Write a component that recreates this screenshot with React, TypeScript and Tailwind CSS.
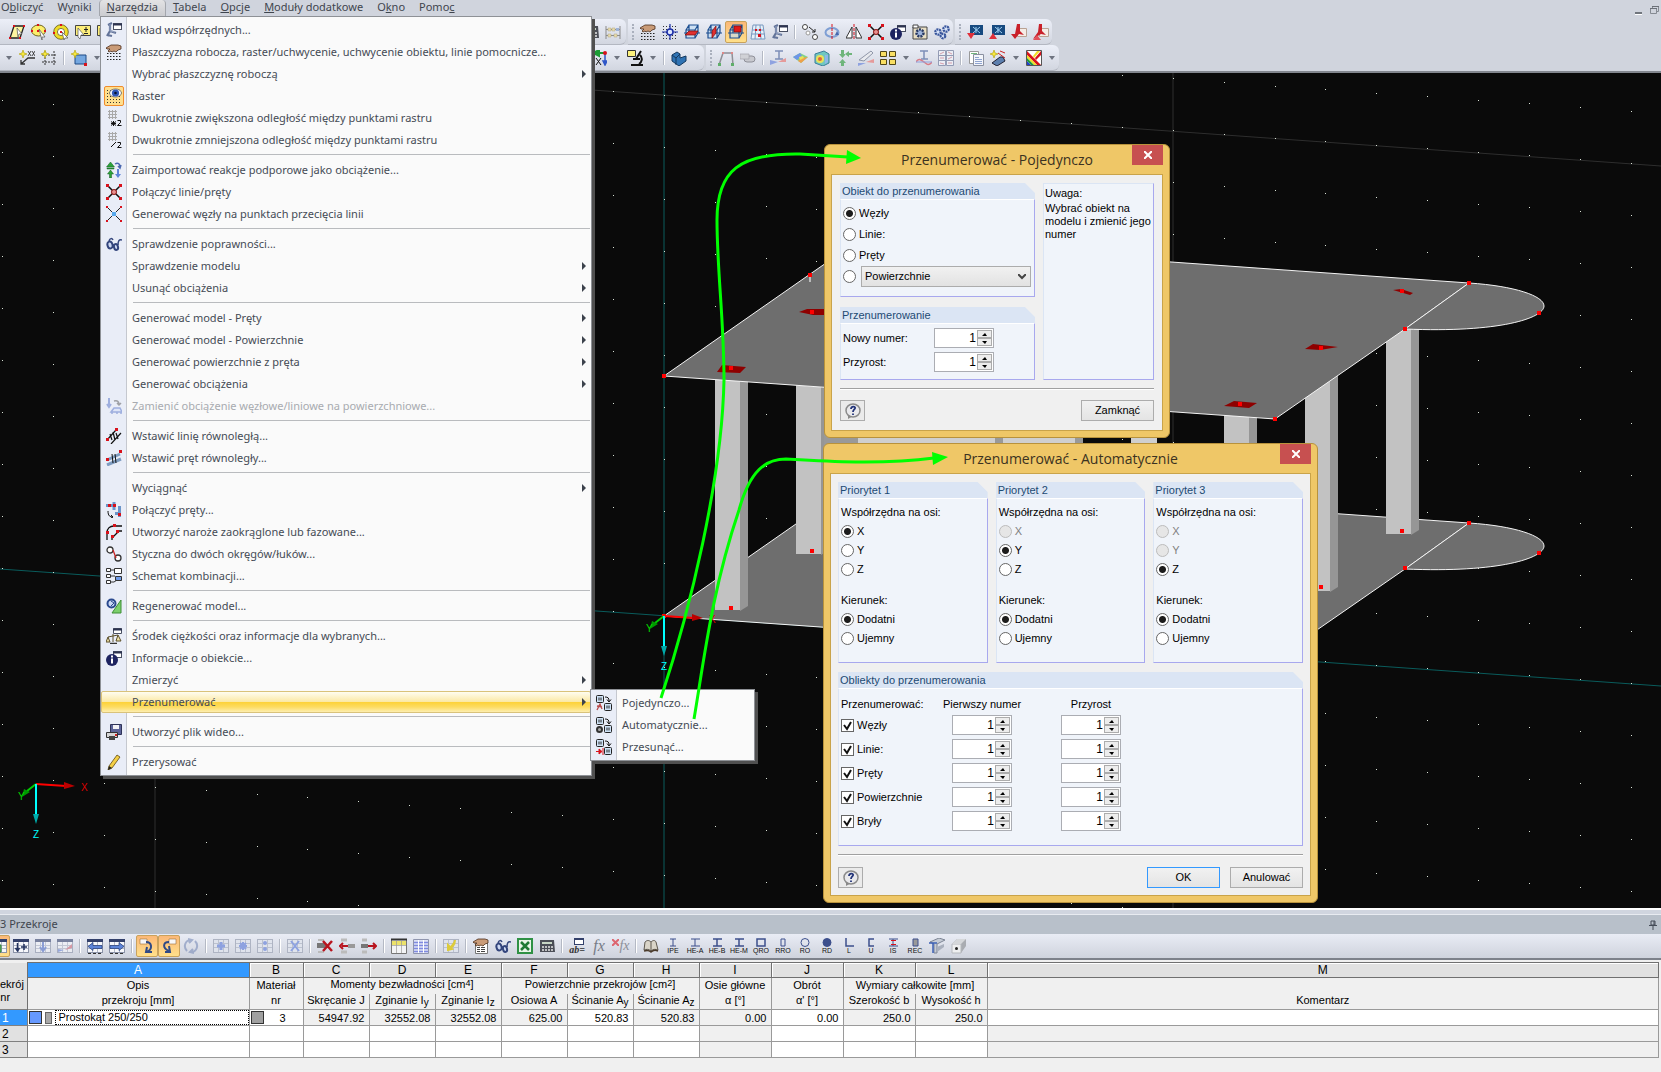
import type { ReactNode } from 'react';
import clsx from 'clsx';

// ---------------------------------------------------------------- icons

const miniWindow = (
  <>
    <rect x="7.5" y="1.5" width="8" height="6" fill="#fff" stroke="#4a5063" />
    <path d="M7 2.5h9" stroke="#2c3350" strokeWidth="2" />
  </>
);

const dotGrid = (
  <path
    d="M1 2.5h14M1 5.5h14M1 8.5h14M1 11.5h14M1 14.5h14"
    stroke="#333"
    strokeDasharray="1 2"
    fill="none"
  />
);

const hand = (
  <path
    d="M0 4l5-3h7l3 1v3l-3 1-2 2-2-1-2 1-1-1-2 1-1-1 2-2-3 0z"
    fill="#c99b78"
    stroke="#4b2f1c"
    strokeWidth=".8"
  />
);

const cornerNodes = (
  <path d="M0 0h3v3h-3zM13 0h3v3h-3zM0 13h3v3h-3zM13 13h3v3h-3z" fill="#d8121c" />
);

const sheet = (
  <>
    <rect x=".5" y="1.5" width="15" height="13" fill="#f6f7fb" stroke="#8b93a8" />
    <path d="M0 2.5h16" stroke="#33406b" strokeWidth="3" />
    <path d="M1 7.5h14M1 10.5h14M5.5 4v10M10.5 4v10" stroke="#b3b9c8" />
  </>
);

const fadedSheet = (
  <>
    <rect x=".5" y="1.5" width="15" height="13" fill="#dfe3ec" stroke="#aeb4c3" />
    <path d="M1 5.5h14M1 9.5h14M5.5 2v12M10.5 2v12" stroke="#bcc2cf" />
  </>
);

const renumBoxes = (
  <>
    <rect x=".5" y=".5" width="7" height="7" rx="1" fill="#cfe3f7" stroke="#222" />
    <rect x="8.5" y="8.5" width="7" height="7" rx="1" fill="#cfe3f7" stroke="#222" />
    <path d="M3 2.5v3M5 2.5v3M11 10.5v3M13 10.5v3" stroke="#222" />
    <path d="M9 2c3 0 4 1 4 4M11 4.500l2 2.500 2-2.500" stroke="#111" fill="none" />
  </>
);

const planes = (
  <path
    d="M5 1h9v8h-9zM2 6h9v8h-9zM2 6l3-5M11 14l3-5M11 6l3-5M0 9h16"
    fill="#bfdcf5"
    fillOpacity=".6"
    stroke="#1d4f91"
    strokeWidth="1.200"
  />
);

const star = (
  <path d="M4 0l1 3 3 1-3 1-1 3-1-3-3-1 3-1z" fill="#f8ea3a" stroke="#b8a91c" strokeWidth=".7" />
);

const glyphs: Record<string, ReactNode> = {
  axes: (
    <>
      <path d="M4 1v8l-3 5M4 9l6 2M1 13l5 1M2 3l4-2" stroke="#63749a" strokeWidth="2.200" fill="none" />
      <path d="M4 2v7l5 1" stroke="#aab8d3" strokeWidth=".7" fill="none" />
      {miniWindow}
    </>
  ),
  handGrid: (
    <>
      <path d="M1 9.500h14M1 12.500h14M1 15.500h14" stroke="#222" strokeDasharray="1.500 1.500" />
      {hand}
    </>
  ),
  gridEye: (
    <>
      {dotGrid}
      <ellipse cx="9.500" cy="5" rx="6" ry="4" fill="#f4f7ff" stroke="#333" strokeWidth=".6" />
      <circle cx="9.500" cy="5" r="3.600" fill="#2f57b8" />
      <circle cx="9.500" cy="5" r="1.300" fill="#08122e" />
    </>
  ),
  gridTimes: (
    <>
      <path d="M3.500 0v9M6.500 0v9M9.500 0v9M2 1.500h9M2 4.500h9M2 7.500h9" stroke="#a9a9a9" />
      <path d="M7.500 11v5M5 11.500l5 4M10 11.500l-5 4M5 13.500h5" stroke="#111" />
      <path d="M11.500 10.500h3v2l-3 3h4" stroke="#111" fill="none" />
    </>
  ),
  gridHalf: (
    <>
      <path d="M3.500 0v9M6.500 0v9M9.500 0v9M2 1.500h9M2 4.500h9M2 7.500h9" stroke="#a9a9a9" />
      <path d="M5 15l5-5" stroke="#111" />
      <path d="M11.500 10.500h3v2l-3 3h4" stroke="#111" fill="none" />
    </>
  ),
  reactions: (
    <>
      <path d="M4.500 0l4 5h-8zM4.500 8l3 4h-2v4h-2v-4h-2zM1 6h7v1h-7z" fill="#2ba33a" stroke="#125c1c" strokeWidth=".5" />
      <path d="M12 16l3-4h-2v-5h-2v5h-2z" fill="#5d84d8" />
      <path d="M9 2c3-2 5 0 5 3M12 4l2 2 1-3" stroke="#4a68b0" fill="none" strokeWidth="1.500" />
    </>
  ),
  joinNodes: (
    <>
      <path d="M2 2l12 12M14 2l-12 12" stroke="#111" strokeWidth="1.500" />
      <circle cx="8" cy="8" r="2.500" fill="#e89090" stroke="#8d1010" />
      {cornerNodes}
    </>
  ),
  crossNodes: (
    <>
      <path d="M1 1l14 14M15 1l-14 14" stroke="#222" />
      <path d="M6 6h4v4h-4z" fill="#58a8ea" />
      <path d="M0 0h2v2h-2zM14 0h2v2h-2zM0 14h2v2h-2zM14 14h2v2h-2z" fill="#d8121c" />
    </>
  ),
  glasses: (
    <>
      <ellipse cx="4" cy="9" rx="2.500" ry="3.500" fill="#cdd9f3" stroke="#33457c" strokeWidth="2" transform="rotate(-15 4 9)" />
      <ellipse cx="10" cy="11" rx="2" ry="3" fill="#cdd9f3" stroke="#33457c" strokeWidth="2" transform="rotate(-15 10 11)" />
      <path d="M3 5c1-3 3-3 4-1M12 9c0-4 1-6 4-5M6 9l2 0" stroke="#33457c" strokeWidth="1.500" fill="none" />
    </>
  ),
  convertLoad: (
    <g opacity=".5">
      <path d="M3 0v8M1 6l2 3 2-3" stroke="#5572c8" strokeWidth="2" fill="none" />
      <path d="M8 3c4-1 5 1 5 4M11 5l2 2 2-2" stroke="#555" fill="none" strokeWidth="1.500" />
      <path d="M5 14l3-4h6l2 4zM6 14v2M11 14v2M15 14v2" stroke="#5572c8" strokeWidth="1.500" fill="#d5def7" />
    </g>
  ),
  parallelLines: (
    <>
      <path d="M1 12l9-10M5 16l10-11M4 6l2 6M7 4l2 8M10 5l2 6" stroke="#111" strokeWidth="1.200" />
      <path d="M0 10h3v3h-3zM9 0h3v3h-3z" fill="#d8121c" />
    </>
  ),
  parallelBars: (
    <>
      <path d="M1 10l13-6M1 15l14-6" stroke="#7e9cc0" strokeWidth="3" />
      <path d="M6 4l1 9M9 4l1 9" stroke="#111" />
      <path d="M0 8h3v3h-3zM13 0h3v3h-3z" fill="#d8121c" />
    </>
  ),
  joinBars: (
    <>
      <path d="M0 3.500h7M8 0v8M13.500 4v11M9 11.500h4" stroke="#6b95c9" strokeWidth="3" />
      <path d="M2 2h3v3h-3zM7 2h3v3h-3zM12 11h3v3h-3z" fill="#d8121c" />
      <path d="M2 9c0 5 2 6 5 6M5 13l2 2-2 1" stroke="#111" fill="none" />
    </>
  ),
  fillet: (
    <>
      <path d="M1 16v-7c0-5 3-7 7-7h8M6 16v-2l7-7h3" stroke="#111" fill="none" strokeWidth="1.300" />
      <path d="M0 7h3v3h-3zM7 0h3v3h-3zM5 11h3v3h-3zM10 6h3v3h-3z" fill="#d8121c" />
    </>
  ),
  tangent: (
    <>
      <circle cx="4" cy="4" r="3" fill="#fff" stroke="#333" strokeWidth="1.300" />
      <circle cx="12" cy="12" r="3" fill="#fff" stroke="#333" strokeWidth="1.300" />
      <path d="M7 4l3 8" stroke="#c22" strokeWidth="1.300" />
    </>
  ),
  scheme: (
    <>
      <path d="M.5.500h4v3h-4zM.5 6.500h4v3h-4zM.5 12.500h4v3h-4zM8.500.500h7v5h-7z" fill="#fff" stroke="#333" />
      <path d="M9.500 8.500h6v4h-6z" fill="#6f9be8" stroke="#333" />
      <path d="M5 2h4M5 8h4M5 14h3l3-2" stroke="#333" fill="none" />
    </>
  ),
  regen: (
    <>
      <path d="M6 15l9-13v13z" fill="#7ccf6c" stroke="#3f8f37" />
      <circle cx="5.500" cy="5.500" r="4" fill="#c9d8f5" stroke="#2b4a8e" strokeWidth="2" />
      <path d="M5 3l3 2-3 3" fill="none" stroke="#2b4a8e" />
    </>
  ),
  balance: (
    <>
      <path d="M7 6v8M2 9l10-2M2 9l-2 5h4zM12 7l-2 6h5z" stroke="#5b4f2a" fill="#f0e3a8" />
      <path d="M4 15.500h7" stroke="#333" strokeWidth="1.500" />
      <path d="M7.500.500h8v5h-8z" fill="#fff" stroke="#4a5063" />
      <path d="M7 1.500h9" stroke="#2c3350" strokeWidth="2" />
    </>
  ),
  info: (
    <>
      {miniWindow}
      <circle cx="6" cy="10" r="6" fill="#1d2360" />
      <path d="M5 8.500h2v5h-2zM5 5.500h2v2h-2z" fill="#fff" />
    </>
  ),
  video: (
    <>
      <path d="M4.500.500h11v10h-11z" fill="#5c6398" stroke="#2e3358" />
      <path d="M7 1h6v4h-6z" fill="#f2f2f6" />
      <path d="M.5 8.500h11v5h-11z" fill="#d6d6d6" stroke="#333" />
      <path d="M3 12h6v4h-6z" fill="#444" />
      <path d="M9 10h2v2h-2z" fill="#c22" />
    </>
  ),
  pencil: (
    <>
      <path d="M3 12l8-11 3 2-8 11-4 2z" fill="#f4cf45" stroke="#5f4a12" strokeWidth=".8" />
      <path d="M2 16l1-4 3 2z" fill="#222" />
    </>
  ),
  renumSingle: (
    <>
      {renumBoxes}
      <path d="M1 15l3-6 2 5M1 11l5 1" stroke="#b94a4a" fill="none" strokeWidth="1.300" />
    </>
  ),
  renumAuto: (
    <>
      {renumBoxes}
      <circle cx="3.500" cy="12.500" r="2.500" fill="#aaa" stroke="#333" strokeWidth="2" />
    </>
  ),
  renumShift: (
    <>
      {renumBoxes}
      <path d="M0 12.500h4M3 10l3 2.500-3 2.500z" stroke="#d8121c" fill="#d8121c" />
      <path d="M7 9v7" stroke="#d8121c" />
    </>
  ),
  selectPoly: (
    <>
      <path d="M5 2h10l-4 12h-10z" fill="#fdf6a0" stroke="#222" strokeWidth="1.300" />
      <path d="M8 4l5 6-3 0-1 4z" fill="#fff" stroke="#555" strokeWidth=".7" />
      <path d="M4 1h2v2h-2zM14 1h2v2h-2zM0 13h2v2h-2zM10 13h2v2h-2z" fill="#d8121c" />
    </>
  ),
  selectEllipse: (
    <>
      <ellipse cx="7.500" cy="6.500" rx="7" ry="5.500" fill="#fdee6a" stroke="#6d6320" />
      <path d="M8 5l6 8-3 0 0 3z" fill="#fff" stroke="#555" strokeWidth=".7" />
      <path d="M6 0h2v2h-2zM6 6h2v2h-2zM0 6h2v2h-2zM13 6h2v2h-2z" fill="#d8121c" />
    </>
  ),
  selectRing: (
    <>
      <circle cx="8" cy="8" r="5.500" fill="#fff" stroke="#f0dc28" strokeWidth="3.500" />
      <circle cx="8" cy="8" r="7.300" fill="none" stroke="#5e5615" strokeWidth=".8" />
      <circle cx="8" cy="8" r="3.600" fill="none" stroke="#5e5615" strokeWidth=".8" />
      <path d="M9 8l6 6-3 0-1 2z" fill="#fff" stroke="#555" strokeWidth=".7" />
      <path d="M7 7h2v2h-2zM7 0h2v2h-2zM0 8h2v2h-2z" fill="#d8121c" />
    </>
  ),
  selectPlus: (
    <>
      <path d="M.5 1.500h15v10h-15z" fill="#fdee7a" stroke="#444" />
      <path d="M11 3v5M9 5.500h4M9 9.500h4" stroke="#222" />
      <path d="M3 4l6 7-3 0-1 4-2-2z" fill="#fff" stroke="#555" strokeWidth=".7" />
    </>
  ),
  abacus: (
    <>
      <path d="M1 2v13M15 2v13M1 5.500h14M1 11.500h14" stroke="#8b8b8b" />
      <path d="M3 4h3v3h-3zM7 4h3v3h-3zM3 10h3v3h-3zM9 10h3v3h-3z" fill="#e8dcae" stroke="#b0a77f" strokeWidth=".5" />
      <path d="M11 4h3v3h-3z" fill="#9db3da" />
    </>
  ),
  snapGrid: (
    <>
      {dotGrid}
      <path d="M8 0v16M0 8h16" stroke="#1c2fa8" strokeWidth="1.200" />
      <circle cx="8" cy="8" r="3" fill="#dde6ff" stroke="#1c2fa8" strokeWidth="1.500" />
    </>
  ),
  planeA: (
    <>
      {planes}
      <path d="M1 11l4-4h9l-3 4z" fill="#e03030" stroke="#7a0d0d" strokeWidth=".7" />
    </>
  ),
  planeB: (
    <>
      {planes}
      <path d="M6 7l4-5v7l-4 5z" fill="#e03030" stroke="#7a0d0d" strokeWidth=".7" />
    </>
  ),
  planeC: (
    <>
      {planes}
      <path d="M6 2h7v6h-7z" fill="#e01818" stroke="#7a0d0d" strokeWidth=".7" />
    </>
  ),
  mesh: (
    <>
      <path d="M3 1h10l2 14h-14zM2 6h12M1 10h14M6 1l-1 14M10 1l1 14" fill="#e8f1fa" stroke="#7898bf" />
      <path d="M5 5h2v2h-2zM9 5h2v2h-2zM8 10h3v3h-3z" fill="#d8121c" />
    </>
  ),
  moveNode: (
    <>
      <circle cx="3" cy="3" r="2.500" fill="#fff" stroke="#444" />
      <circle cx="6" cy="9" r="2" fill="#fff" stroke="#999" />
      <circle cx="13" cy="13" r="2.500" fill="#fff" stroke="#444" />
      <path d="M7 3l6 5M13 5v3h-3" stroke="#222" fill="none" />
    </>
  ),
  rotate: (
    <>
      <ellipse cx="8" cy="8.500" rx="6.500" ry="4.500" fill="none" stroke="#7f9fd4" strokeWidth="2" />
      <path d="M11 11l4 0-2-4z" fill="#4668ad" />
      <path d="M8 0v16" stroke="#d8121c" strokeDasharray="3 1" />
    </>
  ),
  mirror: (
    <>
      <path d="M6 3v11h-6zM10 3v11h6z" fill="#fff" stroke="#333" />
      <path d="M8 0v16" stroke="#d8121c" strokeDasharray="3 1" />
    </>
  ),
  boxGear: (
    <>
      <path d="M1 3h14v12h-14z" fill="#e9dfc4" stroke="#444" />
      <path d="M1 1h5v3h-5z" fill="#fff" stroke="#444" />
      <circle cx="8" cy="9" r="3.500" fill="#9db4dc" stroke="#263761" strokeWidth="2.500" strokeDasharray="2 1" />
    </>
  ),
  cogs: (
    <g fill="#d6e2f8" stroke="#38559c" strokeWidth="2.200" strokeDasharray="2 .7">
      <circle cx="4" cy="8" r="2.700" />
      <circle cx="12" cy="5" r="2.700" />
      <circle cx="9" cy="12" r="2.300" />
    </g>
  ),
  screenDown: (
    <>
      <path d="M3 1h13v10h-13z" fill="#174a80" />
      <path d="M6 3l7 6M13 3l-7 6M9 3v6" stroke="#9fd0f3" />
      <path d="M0 9h8l-4 6z" fill="#e0303a" />
    </>
  ),
  screenUp: (
    <>
      <path d="M3 1h13v10h-13z" fill="#174a80" />
      <path d="M6 3l7 6M13 3l-7 6M9 3v6" stroke="#9fd0f3" />
      <path d="M0 15h8l-4-6z" fill="#e0303a" />
    </>
  ),
  pdfDown: (
    <>
      <path d="M6.500 4.500h9v8h-9z" fill="#f5ece6" stroke="#b9a294" />
      <path d="M6 0h3v7l4 4-5-1v0l-4 5-4-5h4z" fill="#c9202a" />
    </>
  ),
  pdfUp: (
    <>
      <path d="M6.500 4.500h9v8h-9z" fill="#f5ece6" stroke="#b9a294" />
      <path d="M6 0h3v7l4 4-5-1-8 5 5-7z" fill="#c9202a" />
      <path d="M0 16h8l-4-5z" fill="#e0505a" />
    </>
  ),
  newAxis: (
    <>
      <path d="M2 14l7-6h7M2 10v4h4" stroke="#333" fill="none" strokeWidth="1.300" />
      <path d="M9 1l3 5M12 1l-3 5M13 1l3 5M16 1l-3 5" stroke="#222" strokeWidth=".8" />
      {star}
    </>
  ),
  newFrame: (
    <>
      <path d="M4 1v14M13 1v14M1 5h15M1 12h15" stroke="#333" strokeDasharray="2 1" />
      {star}
    </>
  ),
  newBox: (
    <>
      <path d="M4 5h11v9h-11z" fill="#74a7e0" stroke="#1f4b85" />
      <path d="M13 13h3v3h-3z" fill="#d8121c" />
      {star}
    </>
  ),
  viewX: (
    <>
      <path d="M15 3h-8M8 0l-6 3 6 3z" stroke="#1b9c34" strokeWidth="2" fill="#1b9c34" />
      <path d="M14 4v10M12 11l2 4 2-4z" stroke="#2f57c8" strokeWidth="1.500" />
      <circle cx="14" cy="3" r="2" fill="#d8121c" />
      <path d="M0 11.500h3M5 8l5 7M10 8l-5 7" stroke="#111" />
    </>
  ),
  microscope: (
    <>
      <path d="M.5.500h8v6h-8z" fill="#fdf27c" stroke="#333" />
      <path d="M14 1l-5 8M6 9h7M4 15h12M13 5c3 3 2 7-1 9" stroke="#111" strokeWidth="2" fill="none" />
    </>
  ),
  solid: (
    <>
      <path d="M1 5l5-3 3 2v4l6-2v5l-7 5-7-5z" fill="#2f73b4" stroke="#14385e" />
      <path d="M1 5l4 3v7M5 8l4-4" stroke="#14385e" fill="none" />
    </>
  ),
  frame: (
    <>
      <path d="M1 15l4-12h9l1 12" stroke="#8f8f96" strokeWidth="1.500" fill="none" />
      <path d="M0 13h3v3h-3zM13 13h3v3h-3z" fill="#5fae6a" />
      <path d="M4 2h2v2h-2zM13 2h2v2h-2z" fill="#d88" />
    </>
  ),
  capsule: (
    <>
      <rect x="4" y="6" width="11" height="6" rx="3" fill="#c8c9cf" stroke="#8e8f98" />
      <path d="M0 4h9v5h-9z" fill="#d0d1d6" stroke="#a4a5ad" strokeWidth=".7" />
    </>
  ),
  beamForce: (
    <>
      <path d="M5 1h8M9 1v8M5 9h8" stroke="#7d8fb8" strokeWidth="1.500" />
      <path d="M0 10v5l8-3z" fill="#8ea2e0" />
      <path d="M8 12l8-4v4z" fill="#e59a9a" />
    </>
  ),
  surfaceColor: (
    <>
      <path d="M1 7l7-4 8 4-7 6z" fill="#7fd38b" />
      <path d="M1 7l7-4 2 3-5 4z" fill="#6d95e8" />
      <path d="M9 8l7-1-7 6-3-2z" fill="#f0a04a" />
      <path d="M7 7l4-1 1 2-4 2z" fill="#e9e15a" />
    </>
  ),
  solidColor: (
    <>
      <path d="M1 4l9-3 5 3v9l-6 3-8-3z" fill="#6fc7c0" stroke="#3c7d9a" />
      <circle cx="6" cy="9" r="4" fill="#e9e15a" />
      <circle cx="6" cy="9" r="2" fill="#e0633c" />
      <path d="M11 5l3 0v7l-3 2z" fill="#8fb6e8" />
    </>
  ),
  supportArrows: (
    <path
      d="M5 0h3v4h2l-3.500 4-3.500-4h2zM5 16h3v-3h2l-3.500-4-3.500 4h2zM16 3h-3v-2l-4 3 4 3v-2h3z"
      fill="#6fb57b"
    />
  ),
  blade: (
    <>
      <path d="M1 10l12-9 2 2-9 8z" fill="#e8eaef" stroke="#8f96a8" />
      <path d="M0 13h8l-8 3z" fill="#8ea2e0" />
      <path d="M8 12l8-3v4z" fill="#e59a9a" />
    </>
  ),
  fourBoxes: (
    <path
      d="M.5 1.500h6v5h-6zM9.500 1.500h6v5h-6zM.5 9.500h6v5h-6zM9.500 9.500h6v5h-6z"
      fill="#f8de62"
      stroke="#4f4519"
    />
  ),
  moment: (
    <>
      <path d="M4 1h8M8 1v8M5 9h7" stroke="#7d8fb8" strokeWidth="1.500" />
      <path d="M0 12c3-5 6-1 8 0s4 5 8 0" stroke="#d87b86" strokeWidth="1.500" fill="none" />
      <path d="M0 12h16" stroke="#8ea2e0" />
    </>
  ),
  diagrams: (
    <>
      <path d="M.5.500h7v15h-7zM8.500.500h7v15h-7zM0 5.500h16M0 10.500h16" fill="#eceef5" stroke="#949cb5" />
      <path d="M2 4l4-2M10 2l4 2M2 8h4M10 9l4-2M2 13l4 1M10 13h4" stroke="#cb7d8d" strokeWidth=".7" />
    </>
  ),
  report: (
    <>
      <path d="M1.500 1.500h9v12h-9z" fill="#fff" stroke="#999" />
      <path d="M5.500 4.500h10v11h-10z" fill="#f4f6fb" stroke="#8a90a0" />
      <path d="M7 7.500h4M7 9.500h7M7 11.500h7M7 13.500h7" stroke="#8fa4d0" />
      <path d="M3 3.500h6" stroke="#6fb57b" />
    </>
  ),
  wizard: (
    <>
      <path d="M2 13l8-6 3 0 2 4-8 5z" fill="#5c7fae" stroke="#223" />
      <path d="M8 3l7 5M10 1l5 2" stroke="#c22" />
      {star}
    </>
  ),
  palette: (
    <>
      <path d="M.5.500h15v15h-15z" fill="#fff" stroke="#555" />
      <path d="M1 1l14 14h-4l-10-10z" fill="#d8121c" />
      <path d="M1 5l10 10h-3l-7-7z" fill="#f2e02a" />
      <path d="M1 8l7 7h-3l-4-4z" fill="#1d9c3c" />
      <path d="M1 11l4 4h-4z" fill="#2040c8" />
      <path d="M9 8l6-7v4l-5 5z" fill="#d8121c" />
      <path d="M7 6l4-5h3l-6 7z" fill="#f2e02a" />
    </>
  ),
  sheetCheck: (
    <>
      {sheet}
      <path d="M2 7h8v7h-8z" fill="#69c06b" stroke="#2c7a34" />
    </>
  ),
  sheetAdd: (
    <>
      {sheet}
      <path d="M4.500 5v8M2.500 10l2 3 2-3M8 9h6M11 6v6" stroke="#22325f" strokeWidth="1.500" fill="none" />
    </>
  ),
  sheetDown: (
    <g opacity=".6">
      {sheet}
      <path d="M8 4v8M5 9l3 4 3-4" stroke="#5572c8" strokeWidth="2" fill="none" />
    </g>
  ),
  sheetSlope: (
    <g opacity=".6">
      {sheet}
      <path d="M1 14v-3l6 1z" fill="#6b86d8" />
      <path d="M8 12l7-6v4z" fill="#d46a78" />
    </g>
  ),
  sheetLeft: (
    <>
      {sheet}
      <path d="M1 8.500l5-4v3h9v3h-9v2z" fill="#5d84d8" stroke="#223a75" strokeWidth=".7" />
      <path d="M1 15.500h14" stroke="#333" strokeDasharray="3 2" />
    </>
  ),
  sheetRight: (
    <>
      {sheet}
      <path d="M15 8.500l-5-4v3h-9v3h9v2z" fill="#5d84d8" stroke="#223a75" strokeWidth=".7" />
      <path d="M1 15.500h14" stroke="#333" strokeDasharray="3 2" />
    </>
  ),
  jumpDown: (
    <>
      <path d="M1 1h7v5h-7z" fill="#f7f7f7" stroke="#9a6b35" strokeWidth=".6" />
      <path d="M7 4c6 0 7 7 1 10M8 9l-1 5 6 0" stroke="#2f4a86" strokeWidth="2" fill="none" />
    </>
  ),
  jumpUp: (
    <>
      <path d="M8 1h7v5h-7z" fill="#f7f7f7" stroke="#9a6b35" strokeWidth=".6" />
      <path d="M8 4c-6 0-7 6 0 9M8 8l1 6-5 0" stroke="#2f4a86" strokeWidth="2" fill="none" />
    </>
  ),
  refresh: (
    <g opacity=".6" stroke="#7a8cb8" strokeWidth="2" fill="none">
      <path d="M8 2c-6 0-8 7-4 11M8 14c6 0 8-7 4-11M5 1l4 1-3 3M11 15l-4-1 3-3" />
    </g>
  ),
  cellPlus: (
    <>
      {fadedSheet}
      <path d="M8 4v8M4 8h8" stroke="#8ea2e0" strokeWidth="3" />
    </>
  ),
  cellTimes: (
    <>
      {fadedSheet}
      <path d="M5 5l6 6M11 5l-6 6M8 4v8M4 8h8" stroke="#8ea2e0" strokeWidth="2" />
    </>
  ),
  cellDivide: (
    <>
      {fadedSheet}
      <circle cx="8" cy="5" r="2" fill="#8ea2e0" />
      <circle cx="8" cy="11" r="2" fill="#8ea2e0" />
    </>
  ),
  cellX: (
    <>
      {fadedSheet}
      <path d="M4 3l8 10M12 3l-8 10" stroke="#8ea2e0" strokeWidth="2" />
    </>
  ),
  rowDelete: (
    <>
      <path d="M1 2h6M1 14h6" stroke="#bbb" strokeWidth="2" />
      <path d="M0 5h9v5h-9z" fill="#777" />
      <path d="M6 3l9 10M15 3l-9 10" stroke="#b8141e" strokeWidth="2.500" />
    </>
  ),
  rowLeft: (
    <>
      <path d="M2 2h6M2 14h6" stroke="#bbb" strokeWidth="3" />
      <path d="M9 6h7v4h-7z" fill="#999" />
      <path d="M9 8h-6M4 5l-3 3 3 3" stroke="#b8141e" strokeWidth="2" fill="none" />
    </>
  ),
  rowRight: (
    <>
      <path d="M1 2h5M1 14h5" stroke="#bbb" strokeWidth="3" />
      <path d="M0 6h7v4h-7z" fill="#777" />
      <path d="M7 8h7M12 5l3 3-3 3" stroke="#b8141e" strokeWidth="2" fill="none" />
    </>
  ),
  tableYellow: (
    <>
      <path d="M.5 1.500h15v14h-15z" fill="#f3f4f6" stroke="#777" />
      <path d="M1 3h14v4h-14z" fill="#ece26a" />
      <path d="M0 1.500h16" stroke="#333" strokeWidth="2" />
      <path d="M5.500 3v12M10.500 3v12M1 7.500h14" stroke="#999" strokeWidth=".7" />
    </>
  ),
  tableBlue: (
    <>
      <path d="M.5 1.500h15v14h-15z" fill="#dfe3f4" stroke="#8f95ae" />
      <path d="M1 4.500h14M1 7.500h14M1 10.500h14M1 13.500h14" stroke="#7f8ae0" strokeWidth="1.500" />
      <path d="M5.500 2v13M10.500 2v13" stroke="#fff" />
    </>
  ),
  tableNote: (
    <>
      {fadedSheet}
      <path d="M12 2c0 6-4 8-6 8M5 7l0 5 4-1z" stroke="#dccb3c" strokeWidth="2" fill="#dccb3c" />
    </>
  ),
  handPaper: (
    <>
      <path d="M2.500 4.500h12v11h-12z" fill="#fff" stroke="#777" />
      <path d="M4 9.500h3M8 9.500h4M4 11.500h3M8 11.500h4M4 13.500h3M8 13.500h4" stroke="#444" />
      {hand}
    </>
  ),
  excel: (
    <>
      <rect x="1" y="1" width="14" height="14" fill="#e9f5e9" stroke="#2f9145" strokeWidth="2" />
      <path d="M4 4l8 8M12 4l-8 8" stroke="#1f7a35" strokeWidth="2.500" />
    </>
  ),
  calculator: (
    <>
      <path d="M1 2h14l1 12h-15z" fill="#4b4e57" />
      <path d="M3 4h10v2h-10z" fill="#c7d6c5" />
      <path d="M3 9h11M3 12h11" stroke="#e6e6e6" strokeWidth="1.500" strokeDasharray="2 1" />
    </>
  ),
  book: (
    <>
      <path d="M1 12l1-8c2-2 4-2 6 0 2-2 4-2 5 0l2 8c-2-1-5-1-7 1-2-2-5-2-7-1z" fill="#d9d4c8" stroke="#5c564c" />
      <path d="M8 4v9" stroke="#5c564c" />
      <path d="M1 13c3-1 5-1 7 1 2-2 5-2 7-1" stroke="#4a3a2a" strokeWidth="1.500" />
    </>
  ),
  beamT: (
    <>
      <path d="M1 4l9-4 6 2-8 4v9l-3 0v-9z" fill="#c6ccd6" stroke="#7c8494" />
      <path d="M0 5h8M4 5v10" stroke="#3e62b5" strokeWidth="1.500" />
      <path d="M8 9l7-3v3l-7 5" fill="#a9b0bd" />
    </>
  ),
  beamBox: (
    <>
      <path d="M1 6l5-5h9v7l-5 7z" fill="#a9acb1" />
      <path d="M1 6h9v9h-9z" fill="#eeeff0" stroke="#b5b8bd" />
      <path d="M1 6l5-5h9l-5 5z" fill="#d5d7da" />
      <circle cx="5.500" cy="10.500" r="1.500" fill="#222" />
    </>
  ),
  help: (
    <>
      <path d="M3 11v5l5-3z" fill="#8a8a8a" />
      <ellipse cx="8" cy="7.500" rx="7" ry="6.500" fill="#e9e9ec" stroke="#8a8a8a" strokeWidth="1.500" />
      <path d="M6 6c0-3 5-3 4-.500-1 1.500-2 1.500-2 3.500M8 10.500v1.500" stroke="#24357a" strokeWidth="1.800" fill="none" />
    </>
  ),
};

const Icon = ({ name }: { name: string }) => (
  <svg viewBox="0 0 16 16" className="size-4 shrink-0" fill="none" aria-hidden="true">
    {glyphs[name]}
  </svg>
);

// ---------------------------------------------------------------- toolbars

const Tool = ({ name, active, children }: { name: string; active?: boolean; children?: ReactNode }) => (
  <button
    type="button"
    aria-label={name}
    className={clsx(
      'flex h-[22px] w-[22px] shrink-0 items-center justify-center rounded-xs',
      active && 'border border-[#c9a25c] bg-linear-to-b from-[#fbb878] to-[#ffe08a]'
    )}
  >
    {children ?? <Icon name={name} />}
  </button>
);

const Caret = () => (
  <span className="flex w-[14px] shrink-0 justify-center">
    <svg viewBox="0 0 6 4" className="h-1 w-1.5" aria-hidden="true">
      <path d="M0 0h6l-3 4z" fill="#6f7480" />
    </svg>
  </span>
);

const Divider = () => (
  <span className="flex w-2 shrink-0 justify-center">
    <span className="h-3.5 w-px bg-white shadow-[-1px_0_0_#b4b9c4]" />
  </span>
);

const Grip = () => (
  <span className="flex w-[9px] shrink-0 justify-center">
    <span className="h-4 w-0 border-l-2 border-dotted border-[#aab0bd]" />
  </span>
);

// '|' is a divider, 'v' a drop-down caret, '*' marks a pressed button
const Tools = ({ items }: { items: string[] }) =>
  items.map((item, i) => {
    if (item === '|') return <Divider key={i} />;
    if (item === 'v') return <Caret key={i} />;
    return <Tool key={i} name={item.replace('*', '')} active={item.endsWith('*')} />;
  });

const bar = 'flex h-[26px] items-center rounded-r-md border-b border-[#b3b7c1] bg-linear-to-b from-[#eceff8] to-[#d2d6e0]';

const menuBar = [
  ['O', 'b', 'liczyć'],
  ['W', 'y', 'niki'],
  ['', 'N', 'arzędzia'],
  ['', 'T', 'abela'],
  ['', 'O', 'pcje'],
  ['', 'M', 'oduły dodatkowe'],
  ['O', 'k', 'no'],
  ['Pomo', 'c', ''],
];

const TopBars = () => (
  <header className="bg-[#d0d4dd]">
    <div className="flex h-[19px] items-start justify-between">
      <nav className="-ml-1.5 flex">
        {menuBar.map(([pre, key, post]) => (
          <button
            key={pre + key + post}
            type="button"
            className={clsx(
              'h-4 px-[7px] pb-0.5 text-[11px] leading-[14px] whitespace-nowrap text-[#3f454e]',
              key === 'N' && 'rounded-t-sm border-x border-[#a3a6ad] bg-linear-to-b from-[#e3e3e5] to-[#cbccd0]'
            )}
          >
            {pre}
            <span className="underline">{key}</span>
            {post}
          </button>
        ))}
      </nav>
      <div className="flex gap-2 pr-0.5">
        <button type="button" aria-label="Minimalizuj" className="mt-3 h-0.5 w-[7px] bg-[#70757c] shadow-[0_1px_0_#fff]" />
        <button type="button" aria-label="Przywróć" className="mt-1.5 h-2 w-[9px]">
          <svg viewBox="0 0 9 8" className="h-2 w-[9px]" fill="none" stroke="#858a92" aria-hidden="true">
            <path d="M2.500 2v-1.500h6v5h-2M.500 2.500h6v5h-6z" />
            <path d="M2 .500h7M0 2.500h7" stroke="#6b7078" />
          </svg>
        </button>
      </div>
    </div>
    <div className="flex gap-0.5">
      <div className={clsx(bar, 'w-[626px] justify-between pr-0.5 pl-1.5')}>
        <div className="flex">
          <Tools items={['selectPoly', 'selectEllipse', 'selectRing', 'selectPlus', 'selectPlus']} />
        </div>
        <div className="flex">
          <Tools items={['calculator', 'abacus']} />
        </div>
      </div>
      <div className={bar}>
        <Grip />
        <Tools
          items={['handGrid', 'snapGrid', 'planeA', 'planeB', 'planeC*', 'mesh', 'axes', '|', 'moveNode', 'rotate', 'mirror', 'joinNodes', 'info', 'boxGear', 'cogs']}
        />
      </div>
      <div className={bar}>
        <Grip />
        <Tools items={['screenDown', 'screenUp', 'pdfDown', 'pdfUp']} />
      </div>
    </div>
    <div className="flex gap-0.5 border-b-2 border-[#83878f]">
      <div className={clsx(bar, 'w-[704px] justify-between')}>
        <div className="flex items-center pl-0.5">
          <Tools items={['v', 'newAxis', 'newFrame', '|', 'newBox', 'v']} />
        </div>
        <div className="flex items-center">
          <Tools items={['viewX', 'v', 'microscope', 'v', '|', 'solid', 'v']} />
        </div>
      </div>
      <div className={bar}>
        <Grip />
        <Tools
          items={['frame', 'capsule', '|', 'beamForce', 'surfaceColor', 'solidColor', 'supportArrows', 'blade', 'fourBoxes', 'v', 'moment', 'diagrams', '|', 'report', 'wizard', 'v', 'palette', 'v']}
        />
      </div>
    </div>
  </header>
);

// ---------------------------------------------------------------- 3D view

// raster points: 51px columns, 52px rows, each row falling to the right
const rasterPath = Array.from({ length: 33 }, (_, col) =>
  Array.from({ length: 19 }, (_, row) => {
    const x = Math.round(2 + col * 50.9);
    const y = Math.round(-4 + row * 52 + col * 3.58);
    return `M${x} ${y}h1v1h-1z`;
  }).join('')
).join('');

const slab = 'M664 376L859 240L1469 283L1405 329L1275 419z';
const slabEnd = 'M1469 283C1515 286 1544 296 1544 306C1544 318 1500 333 1405 329z';

const Column = ({ x, top, bottom }: { x: number; top: number; bottom: number }) => (
  <>
    <path d={`M${x} ${top}h25v${bottom - top}h-25z`} fill="#c2c2c2" />
    <path d={`M${x + 25} ${top}h8v${bottom - top - 4}l-8 5z`} fill="#969696" />
  </>
);

const AxisCross = () => (
  <g fontSize="10" fontFamily="Liberation Sans, Arial, sans-serif">
    <path d="M0 0L30 2" stroke="#f00" strokeWidth="2" />
    <path d="M28 -2L39 2L28 5z" fill="#b00" />
    <path d="M0 0L-9 7" stroke="#0c0" strokeWidth="2" />
    <path d="M-14 13L-12 5L-6 8z" fill="#090" />
    <path d="M0 0V32" stroke="#0ff" strokeWidth="2" />
    <path d="M-3 30h6L0 40z" fill="#0aa" />
    <text x="45" y="7" fill="#d00">X</text>
    <text x="-18" y="16" fill="#0d0">Y</text>
    <text x="-3" y="54" fill="#0ff">Z</text>
  </g>
);

const nodes = [
  [664, 376], [810, 275], [731, 368], [812, 312], [1469, 283], [1405, 329], [1539, 313], [1275, 419],
  [1402, 291], [1321, 348], [1240, 404], [1469, 523], [1405, 568], [1539, 553], [1402, 531],
  [1321, 587], [731, 608], [812, 551], [664, 616],
];

const ModelView = () => (
  <main className="relative flex-1 overflow-hidden bg-[#0a0a0a]">
    <svg viewBox="0 73 1661 835" preserveAspectRatio="xMinYMin slice" className="absolute inset-0 h-full w-full" role="img" aria-label="Model 3D">
      <path d="M592 90L1661 166M1173 72V908M155 560V908" stroke="#2e2e2e" fill="none" />
      <path d="M664 72V908M0 569L1661 686" stroke="#0a5c5c" fill="none" />
      <path d={rasterPath} fill="#d9e2d6" />

      <g transform="translate(0 240)" fill="#6e6e6e" stroke="#f4f4f4" strokeWidth="1">
        <path d={slab} />
        <path d={slabEnd} />
      </g>
      <Column x={715} top={376} bottom={610} />
      <Column x={796} top={384} bottom={554} />
      <Column x={1224} top={412} bottom={560} />
      <Column x={1305} top={350} bottom={591} />
      <Column x={1386} top={325} bottom={534} />
      <path d="M824 400h34v60h-34zM995 400h8v60h-8zM1075 400h8v60h-8z" fill="#999" />
      <path d="M858 400h137v60h-137zM1003 400h72v60h-72zM1131 400h26v60h-26z" fill="#cfcfcf" />
      <g fill="#6e6e6e" stroke="#f4f4f4" strokeWidth="1">
        <path d={slab} />
        <path d={slabEnd} />
      </g>

      <path
        d="M717 372l5-7 24 2-6 6zM799 312l8-3 18 0v6l-12 0zM1224 406l10-5 23 2-8 5zM1305 349l8-5 25 3-18 3zM1393 290l8-1 12 4-3 2z"
        fill="#8e0000"
      />
      <path d="M810 277v5" stroke="#bbb" strokeWidth="2" />
      <path d={nodes.map(([x, y]) => `M${x - 2} ${y - 2}h4v4h-4z`).join('')} fill="#f00" />
      <g transform="translate(664 616)">
        <AxisCross />
      </g>
      <g transform="translate(36 784)">
        <AxisCross />
      </g>
    </svg>
  </main>
);

// ---------------------------------------------------------------- menus

interface MenuEntry {
  label: string;
  icon?: string;
  sub?: boolean;
  disabled?: boolean;
  state?: 'pressed' | 'hover';
}

const toolsMenu: MenuEntry[][] = [
  [
    { label: 'Układ współrzędnych...', icon: 'axes' },
    { label: 'Płaszczyzna robocza, raster/uchwycenie, uchwycenie obiektu, linie pomocnicze...', icon: 'handGrid' },
    { label: 'Wybrać płaszczyznę roboczą', sub: true },
    { label: 'Raster', icon: 'gridEye', state: 'pressed' },
    { label: 'Dwukrotnie zwiększona odległość między punktami rastru', icon: 'gridTimes' },
    { label: 'Dwukrotnie zmniejszona odległość między punktami rastru', icon: 'gridHalf' },
  ],
  [
    { label: 'Zaimportować reakcje podporowe jako obciążenie...', icon: 'reactions' },
    { label: 'Połączyć linie/pręty', icon: 'joinNodes' },
    { label: 'Generować węzły na punktach przecięcia linii', icon: 'crossNodes' },
  ],
  [
    { label: 'Sprawdzenie poprawności...', icon: 'glasses' },
    { label: 'Sprawdzenie modelu', sub: true },
    { label: 'Usunąć obciążenia', sub: true },
  ],
  [
    { label: 'Generować model - Pręty', sub: true },
    { label: 'Generować model - Powierzchnie', sub: true },
    { label: 'Generować powierzchnie z pręta', sub: true },
    { label: 'Generować obciążenia', sub: true },
    { label: 'Zamienić obciążenie węzłowe/liniowe na powierzchniowe...', icon: 'convertLoad', disabled: true },
  ],
  [
    { label: 'Wstawić linię równoległą...', icon: 'parallelLines' },
    { label: 'Wstawić pręt równoległy...', icon: 'parallelBars' },
  ],
  [
    { label: 'Wyciągnąć', sub: true },
    { label: 'Połączyć pręty...', icon: 'joinBars' },
    { label: 'Utworzyć naroże zaokrąglone lub fazowane...', icon: 'fillet' },
    { label: 'Styczna do dwóch okręgów/łuków...', icon: 'tangent' },
    { label: 'Schemat kombinacji...', icon: 'scheme' },
  ],
  [{ label: 'Regenerować model...', icon: 'regen' }],
  [
    { label: 'Środek ciężkości oraz informacje dla wybranych...', icon: 'balance' },
    { label: 'Informacje o obiekcie...', icon: 'info' },
    { label: 'Zmierzyć', sub: true },
    { label: 'Przenumerować', sub: true, state: 'hover' },
  ],
  [{ label: 'Utworzyć plik wideo...', icon: 'video' }],
  [{ label: 'Przerysować', icon: 'pencil' }],
];

const renumberMenu: MenuEntry[] = [
  { label: 'Pojedynczo...', icon: 'renumSingle' },
  { label: 'Automatycznie...', icon: 'renumAuto' },
  { label: 'Przesunąć...', icon: 'renumShift' },
];

const MenuRow = ({ label, icon, sub, disabled, state }: MenuEntry) => (
  <button
    type="button"
    disabled={disabled}
    className={clsx(
      'flex h-[22px] w-full items-center border pr-1 text-left text-[11px] whitespace-nowrap',
      disabled ? 'text-[#a8abb0]' : 'text-[#454b55]',
      state === 'hover'
        ? 'rounded-xs border-[#d9c27a] bg-[linear-gradient(#fffdf0,#fbe9a6_48%,#fdd23a_52%,#fddc62_75%,#fdeeb0)]'
        : 'border-transparent'
    )}
  >
    <span
      className={clsx(
        'ml-0.5 flex h-5 w-5 items-center justify-center',
        state === 'pressed' && 'rounded-xs border border-[#f08c2c] bg-[#ffdf8e]'
      )}
    >
      {icon && <Icon name={icon} />}
    </span>
    <span className="ml-2">{label}</span>
    {sub && (
      <svg viewBox="0 0 4 8" className="ml-auto h-2 w-1" aria-hidden="true">
        <path d="M0 0l4 4-4 4z" fill="#3c424c" />
      </svg>
    )}
  </button>
);

const menuBox =
  'absolute border border-[#8e9196] bg-[linear-gradient(to_right,#e9edf7_25px,#c5c8cf_25px,#c5c8cf_26px,#fafafa_26px)] shadow-[3px_3px_0_#505050]';

const ToolsMenu = () => (
  <div className={clsx(menuBox, 'top-4 left-[100px] w-[492px] py-0.5')}>
    {toolsMenu.map((group, i) => (
      <div key={group[0].label}>
        {i > 0 && <hr className="my-[3px] mr-px ml-8 h-0.5 border-0 border-t border-t-[#b9bbbe]" />}
        {group.map((entry) => (
          <MenuRow key={entry.label} {...entry} />
        ))}
      </div>
    ))}
  </div>
);

const RenumberMenu = () => (
  <div className={clsx(menuBox, 'top-[689px] left-[590px] w-[165px] py-0.5')}>
    {renumberMenu.map((entry) => (
      <MenuRow key={entry.label} {...entry} />
    ))}
  </div>
);

// ---------------------------------------------------------------- dialogs

const Dialog = ({ title, className, children }: { title: string; className: string; children: ReactNode }) => (
  <section
    role="dialog"
    aria-label={title}
    className={clsx('absolute rounded-md border border-[#b8923c] bg-[#efc767] px-1.5 pb-1.5 text-[11px] leading-[13px] text-black', className)}
  >
    <div className="relative flex h-[29px] items-center justify-center">
      <h2 className="font-['Open_Sans','Noto_Sans',sans-serif] text-[14px] leading-5 text-[#3b3221]">{title}</h2>
      <button type="button" aria-label="Zamknij" className="absolute top-0 right-0 flex h-5 w-[31px] items-center justify-center bg-[#c75050]">
        <svg viewBox="0 0 8 8" className="size-2" aria-hidden="true">
          <path d="M0 0l8 8M8 0l-8 8" stroke="#fff" strokeWidth="2" />
        </svg>
      </button>
    </div>
    <div className="border border-[#c9a349] bg-[#f0f0f0]">{children}</div>
  </section>
);

const Group = ({ title, className, children }: { title: string; className?: string; children: ReactNode }) => (
  <div role="group" aria-label={title}>
    <h3 className="h-4 bg-[#dbe5f4] pl-0.5 leading-4 text-[#1d4a73] [clip-path:polygon(0_0,calc(100%-10px)_0,100%_10px,100%_100%,0_100%)]">
      {title}
    </h3>
    <div className={clsx('border-t border-r border-b border-l border-t-white border-r-[#a8a8ee] border-b-[#a8a8ee] border-l-[#dbe5f4] bg-[#f0f4fa]', className)}>
      {children}
    </div>
  </div>
);

const Radio = ({ name, label, checked, disabled }: { name: string; label?: string; checked?: boolean; disabled?: boolean }) => (
  <label className={clsx('flex items-center gap-[3px]', disabled && 'text-[#808080]')}>
    <input
      type="radio"
      name={name}
      aria-label={label ?? 'Powierzchnie'}
      defaultChecked={checked}
      disabled={disabled}
      className="size-[13px] shrink-0 appearance-none rounded-full border border-[#666] bg-white checked:bg-[radial-gradient(circle,#1c1c1c_3px,#fff_4px)] disabled:border-[#bcbcbc] disabled:bg-[#e6e6e6]"
    />
    {label}
  </label>
);

const Spin = ({ label }: { label: string }) => (
  <span className="flex h-5 w-[60px] border border-[#abadb3] bg-white">
    <input type="text" aria-label={label} defaultValue="1" className="w-0 flex-1 text-right text-[12px] leading-4 outline-none" />
    <span className="m-px flex w-[15px] flex-col">
      <button type="button" aria-label="Więcej" className="flex h-2 items-center justify-center border border-[#acacac] bg-[#ededed]">
        <svg viewBox="0 0 5 3" className="h-[3px] w-[5px]"><path d="M0 3h5L3 0z" /></svg>
      </button>
      <button type="button" aria-label="Mniej" className="flex h-2 items-center justify-center border border-[#acacac] bg-[#ededed]">
        <svg viewBox="0 0 5 3" className="h-[3px] w-[5px]"><path d="M0 0h5L3 3z" /></svg>
      </button>
    </span>
  </span>
);

const PushButton = ({ primary, children }: { primary?: boolean; children: ReactNode }) => (
  <button
    type="button"
    className={clsx('h-[21px] w-[73px] border bg-linear-to-b from-[#f1f1f1] to-[#e4e4e4]', primary ? 'border-[#3399ff]' : 'border-[#acacac]')}
  >
    {children}
  </button>
);

const HelpButton = () => (
  <button type="button" aria-label="Pomoc" className="flex h-[21px] w-[25px] items-center justify-center border border-[#acacac] bg-[#ebebeb]">
    <Icon name="help" />
  </button>
);

const SingleDialog = () => (
  <Dialog title="Przenumerować - Pojedynczo" className="top-36 left-[824px] w-[346px]">
    <div className="px-2 pt-2 pb-[9px]">
      <div className="flex gap-2">
        <div className="flex w-[195px] flex-col gap-2.5">
          <Group title="Obiekt do przenumerowania" className="grid auto-rows-[21px] items-center pt-[3px] pb-[9px] pl-0.5">
            <Radio name="object" label="Węzły" checked />
            <Radio name="object" label="Linie:" />
            <Radio name="object" label="Pręty" />
            <div className="flex items-center gap-[5px]">
              <Radio name="object" />
              <div className="relative flex-1 pr-[3px]">
                <select aria-label="Typ obiektu" className="block h-[21px] w-full appearance-none border border-[#acacac] bg-linear-to-b from-[#f1f1f1] to-[#e2e2e2] pl-[3px] outline-none">
                  <option>Powierzchnie</option>
                </select>
                <svg viewBox="0 0 8 6" className="pointer-events-none absolute top-2 right-2 h-1.5 w-2">
                  <path d="M0 0l4 4 4-4" stroke="#444" strokeWidth="2" fill="none" />
                </svg>
              </div>
            </div>
          </Group>
          <Group title="Przenumerowanie" className="grid grid-cols-[92px_60px] items-center gap-y-1 pt-1 pb-[7px] pl-px">
            <span className="pl-px">Nowy numer:</span>
            <Spin label="Nowy numer" />
            <span className="pl-px">Przyrost:</span>
            <Spin label="Przyrost" />
          </Group>
        </div>
        <div className="flex-1 border border-[#dbe5f4] border-r-[#a8a8ee] border-b-[#a8a8ee] bg-[#f0f4fa] pt-[3px] pl-px">
          <p className="mb-0.5">Uwaga:</p>
          <p>Wybrać obiekt na modelu i zmienić jego numer</p>
        </div>
      </div>
      <hr className="mt-2 mb-[11px] border-0 border-t border-t-[#a0a0a0] shadow-[0_1px_0_#fff]" />
      <div className="flex justify-between">
        <HelpButton />
        <PushButton>Zamknąć</PushButton>
      </div>
    </div>
  </Dialog>
);

const axisNames = ['X', 'Y', 'Z'];
const objectKinds = ['Węzły', 'Linie:', 'Pręty', 'Powierzchnie', 'Bryły'];

const Check = ({ label }: { label: string }) => (
  <label className="flex items-center gap-[3px]">
    <span className="relative size-[13px]">
      <input type="checkbox" defaultChecked className="block size-[13px] appearance-none border border-[#666] bg-white" />
      <svg viewBox="0 0 13 13" className="pointer-events-none absolute inset-0">
        <path d="M3 6l3 4 4-7" stroke="#111" strokeWidth="2" fill="none" />
      </svg>
    </span>
    {label}
  </label>
);

const AutoDialog = () => (
  <Dialog title="Przenumerować - Automatycznie" className="top-[443px] left-[823px] w-[495px]">
    <div className="px-[7px] pt-2 pb-[7px]">
      <div className="grid grid-cols-3 gap-2">
        {axisNames.map((chosen, priority) => (
          <Group key={chosen} title={`Priorytet ${priority + 1}`} className="pt-1 pb-3.5 pl-0.5">
            <div className="grid auto-rows-[19px] items-center">
              <span>Współrzędna na osi:</span>
              {axisNames.map((axis, i) => (
                <Radio key={axis} name={`axis${priority}`} label={axis} checked={axis === chosen} disabled={i < priority} />
              ))}
            </div>
            <div className="mt-3 grid auto-rows-[19px] items-center">
              <span>Kierunek:</span>
              <Radio name={`dir${priority}`} label="Dodatni" checked />
              <Radio name={`dir${priority}`} label="Ujemny" />
            </div>
          </Group>
        ))}
      </div>
      <div className="mt-[9px]">
        <Group title="Obliekty do przenumerowania" className="pt-1.5 pb-3 pl-0.5">
          <div className="grid h-[18px] grid-cols-[111px_109px_60px] items-center">
            <span>Przenumerować:</span>
            <span className="flex w-[60px] justify-center whitespace-nowrap">Pierwszy numer</span>
            <span className="flex w-[60px] justify-center">Przyrost</span>
          </div>
          {objectKinds.map((kind) => (
            <div key={kind} className="grid h-6 grid-cols-[111px_109px_60px] items-center">
              <Check label={kind} />
              <Spin label={`Pierwszy numer ${kind}`} />
              <Spin label={`Przyrost ${kind}`} />
            </div>
          ))}
        </Group>
      </div>
      <hr className="mt-2 mb-3 border-0 border-t border-t-[#a0a0a0] shadow-[0_1px_0_#fff]" />
      <div className="flex items-center gap-2.5">
        <HelpButton />
        <span className="flex-1" />
        <PushButton primary>OK</PushButton>
        <PushButton>Anulować</PushButton>
      </div>
    </div>
  </Dialog>
);

// hand-drawn arrows leading from the submenu to the windows
const Pointers = () => (
  <svg viewBox="0 0 1661 1072" preserveAspectRatio="xMinYMin slice" className="pointer-events-none absolute inset-0 h-full w-full" aria-hidden="true">
    <g fill="none" stroke="#0f0" strokeWidth="3">
      <path d="M661 698C690 610 722 480 724 380C724 320 717 270 717 220C717 170 740 153 800 154L848 157" />
      <path d="M694 719C704 660 712 590 739 510C750 470 766 459 786 459C820 461 880 465 934 458" />
    </g>
    <path d="M847 150L861 158L846 164zM932 452L948 457L933 465z" fill="#0f0" />
  </svg>
);

// ---------------------------------------------------------------- table

const profiles: [string, ReactNode][] = [
  ['IPE', <path d="M5 1h6M8 1v7M5 8h6" />],
  ['HE-A', <path d="M4 1h9M8 1v7M4 8h9" />],
  ['HE-B', <path d="M4 1h9M8 1v7M4 8h9" strokeWidth="1.500" />],
  ['HE-M', <path d="M4 1h9M8 1v7M4 8h9" strokeWidth="1.500" />],
  ['QRO', <path d="M4 1h8v7h-8z" strokeWidth="1.500" />],
  ['RRO', <path d="M6 1h4v7h-4z" />],
  ['RO', <circle cx="8" cy="4.500" r="4" />],
  ['RD', <circle cx="8" cy="4.500" r="4" fill="#3c4f8c" />],
  ['L', <path d="M5 0v8h8" strokeWidth="1.500" />],
  ['U', <path d="M11 1h-5v7h5" strokeWidth="1.500" />],
  ['IS', (
    <>
      <path d="M4 1h9M8 1v7M4 8h9" />
      <path d="M6 2.500h5M6 6.500h5" stroke="#d8121c" />
    </>
  )],
  ['REC', <path d="M6 1h5v7h-5z" fill="#999" />],
];

const TableToolbar = () => (
  <div className="flex h-[26px] items-center overflow-hidden border-b-2 border-[#7d818a] bg-linear-to-b from-[#e9ecf5] to-[#cfd3dd]">
    <div className="-ml-3 flex items-center">
      <Tools
        items={['sheetCheck*', 'sheetAdd', 'sheetDown', 'sheetSlope', '|', 'sheetLeft', 'sheetRight', '|', 'jumpDown*', 'jumpUp*', 'refresh', '|', 'cellPlus', 'cellTimes', 'cellDivide', '|', 'cellX', '|', 'rowDelete', 'rowLeft', 'rowRight', '|', 'tableYellow', 'tableBlue', '|', 'tableNote', '|', 'handPaper', 'glasses', 'excel', 'calculator', '|']}
      />
      <Tool name="Podpis">
        <span className="flex flex-col items-center font-['Liberation_Serif',serif] text-[10px] leading-[9px] font-bold text-[#333] italic">
          <span className="ml-1 h-[7px] w-2.5 border border-t-2 border-[#33406b] bg-white" />
          ab=
        </span>
      </Tool>
      <Tool name="Funkcja">
        <span className="font-['Liberation_Serif',serif] text-base leading-4 text-[#777c86] italic">fx</span>
      </Tool>
      <Tool name="Usuń funkcję">
        <span className="flex font-['Liberation_Serif',serif] text-sm leading-4 text-[#8b8f98] italic">
          <svg viewBox="0 0 7 7" className="mt-px size-[7px]" aria-hidden="true">
            <path d="M0 0l7 7M7 0l-7 7" stroke="#dd6670" strokeWidth="2" />
          </svg>
          fx
        </span>
      </Tool>
      <Divider />
      <Tools items={['book']} />
      {profiles.map(([label, shape]) => (
        <Tool key={label} name={label}>
          <span className="flex flex-col items-center">
            <svg viewBox="0 0 16 9" className="h-[9px] w-4" fill="none" stroke="#3c4f8c">
              {shape}
            </svg>
            <span className="text-[7px] leading-[8px] text-[#111]">{label}</span>
          </span>
        </Tool>
      ))}
      <Tools items={['beamT', 'beamBox']} />
    </div>
  </div>
);

const columns = [
  { id: 'A', value: 'Prostokąt 250/250', width: 'w-[222px]' },
  { id: 'B', value: '3', width: 'w-[54px]' },
  { id: 'C', value: '54947.92', width: 'w-[66px]', locked: true },
  { id: 'D', value: '32552.08', width: 'w-[66px]', locked: true },
  { id: 'E', value: '32552.08', width: 'w-[66px]', locked: true },
  { id: 'F', value: '625.00', width: 'w-[66px]', locked: true },
  { id: 'G', value: '520.83', width: 'w-[66px]' },
  { id: 'H', value: '520.83', width: 'w-[66px]', locked: true },
  { id: 'I', value: '0.00', width: 'w-[72px]', locked: true },
  { id: 'J', value: '0.00', width: 'w-[72px]' },
  { id: 'K', value: '250.0', width: 'w-[72px]', locked: true },
  { id: 'L', value: '250.0', width: 'w-[72px]', locked: true },
  { id: 'M', value: '', width: '' },
];

const sub = (text: string, index: string) => (
  <>
    {text}
    <span className="relative top-0.5 text-[10px]">{index}</span>
  </>
);

const sup = (text: string, index: string) => (
  <>
    {text}
    <span className="relative -top-0.5 text-[9px]">{index}</span>]
  </>
);

const units: ReactNode[] = [
  'przekroju [mm]',
  'nr',
  'Skręcanie J',
  sub('Zginanie I', 'y'),
  sub('Zginanie I', 'z'),
  'Osiowa A',
  sub('Ścinanie A', 'y'),
  sub('Ścinanie A', 'z'),
  'α [°]',
  "α' [°]",
  'Szerokość b',
  'Wysokość h',
  'Komentarz',
];

const head = 'border-x border-[#9a9a9a] bg-[#f0f0f0] p-0 pb-0.5 leading-[12px] font-normal';

const SectionTable = () => (
  <div className="mt-0.5 pr-0.5 pb-3.5">
    <table className="w-full table-fixed border-collapse text-[11px] leading-[14px] whitespace-nowrap text-black">
      <colgroup>
        <col className="w-[27px]" />
        {columns.map((c) => (
          <col key={c.id} className={c.width} />
        ))}
      </colgroup>
      <thead>
        <tr className="h-[15px]">
          <th className="border-r border-[#707070] bg-[#e1e1e1] p-0" />
          {columns.map((c) => (
            <th
              key={c.id}
              scope="col"
              className={clsx(
                'border border-[#707070] p-0 text-[12px] font-normal',
                c.id === 'A' ? 'bg-[#3399ff] text-white' : 'bg-[#e1e1e1] shadow-[inset_1px_1px_0_#fff]'
              )}
            >
              {c.id}
            </th>
          ))}
        </tr>
        <tr className="h-4">
          <th rowSpan={2} className="border-r border-[#707070] bg-[#e1e1e1] p-0 pr-1 pb-1 leading-[13px] font-normal">
            ekrój
            <br />
            <span className="pr-3">nr</span>
          </th>
          <th className={head}>Opis</th>
          <th className={head}>Materiał</th>
          <th className={head} colSpan={3}>{sup('Momenty bezwładności [cm', '4')}</th>
          <th className={head} colSpan={3}>{sup('Powierzchnie przekrojów [cm', '2')}</th>
          <th className={head}>Osie główne</th>
          <th className={head}>Obrót</th>
          <th className={head} colSpan={2}>Wymiary całkowite [mm]</th>
          <th className={head} />
        </tr>
        <tr className="h-4">
          {units.map((unit, i) => (
            <th key={columns[i].id} className={head}>{unit}</th>
          ))}
        </tr>
      </thead>
      <tbody>
        {[1, 2, 3].map((row) => (
          <tr key={row} className="h-4">
            <th
              scope="row"
              className={clsx(
                'border border-l-0 border-[#808080] p-0 pr-4 text-[12px] font-normal',
                row === 1 ? 'bg-[#3399ff] text-white' : 'bg-[#e1e1e1]'
              )}
            >
              {row}
            </th>
            {columns.map((c) => (
              <td
                key={c.id}
                className={clsx(
                  'border border-[#9a9a9a] p-0 text-right',
                  (row === 1 ? c.locked : c.id === 'I' || c.id === 'M') ? 'bg-[#f0f0f0]' : 'bg-white'
                )}
              >
                {row === 1 && c.id === 'A' && (
                  <div className="flex items-center gap-[3px] pl-px text-left">
                    <span className="h-[13px] w-[13px] border border-[#333] bg-[#6699ff]" />
                    <span className="h-3 w-[7px] border border-[#666] bg-[#a8a8a8]" />
                    <span className="flex-1 border border-dotted border-black pl-[3px] leading-[13px]">{c.value}</span>
                  </div>
                )}
                {row === 1 && c.id === 'B' && (
                  <div className="flex items-center pl-px">
                    <span className="h-[13px] w-[13px] border border-[#333] bg-[#a0a0a0]" />
                    <span className="flex-1 pr-px text-center">{c.value}</span>
                  </div>
                )}
                {row === 1 && c.id !== 'A' && c.id !== 'B' && <span className="pr-1">{c.value}</span>}
              </td>
            ))}
          </tr>
        ))}
      </tbody>
    </table>
  </div>
);

const TablePanel = () => (
  <section className="border-t-2 border-white bg-[#f0f0f0] font-['Liberation_Sans',Arial,sans-serif]">
    <div className="h-1 bg-[#d0d5df]" />
    <div className="flex h-5 items-center justify-between border-t border-[#e8ebf1] bg-[#b8c0ca] pr-1 font-['Noto_Sans',sans-serif] text-[11px] text-[#3f454e]">
      <h2>3 Przekroje</h2>
      <svg viewBox="0 0 8 10" className="h-2.5 w-2" fill="none" stroke="#444b57" aria-hidden="true">
        <path d="M2 1h4v4h-4zM0 5.500h8M4 6v4M5 1v4" />
      </svg>
    </div>
    <TableToolbar />
    <SectionTable />
  </section>
);

export default function App() {
  return (
    <div className="relative flex h-screen flex-col overflow-hidden font-['Noto_Sans','Open_Sans',sans-serif]">
      <TopBars />
      <ModelView />
      <TablePanel />
      <div className="font-['Liberation_Sans',Arial,sans-serif]">
        <SingleDialog />
        <AutoDialog />
      </div>
      <ToolsMenu />
      <RenumberMenu />
      <Pointers />
    </div>
  );
}
